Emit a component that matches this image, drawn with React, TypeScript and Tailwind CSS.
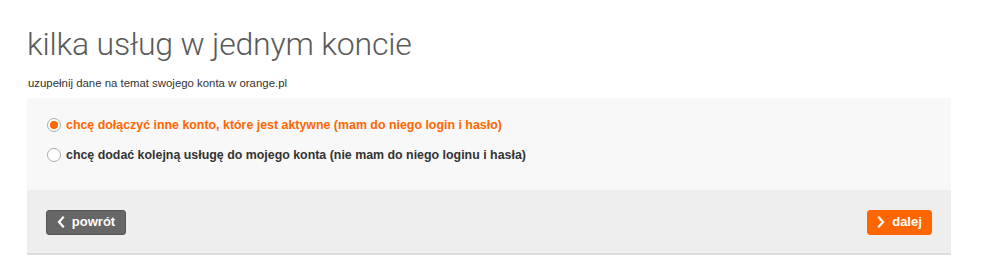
import React, { useState } from 'react'

const options = [
  { id: 'join', label: 'chcę dołączyć inne konto, które jest aktywne (mam do niego login i hasło)' },
  { id: 'add', label: 'chcę dodać kolejną usługę do mojego konta (nie mam do niego loginu i hasła)' },
]

function Chevron({ dir }: { dir: 'left' | 'right' }) {
  return (
    <svg width="8" height="12" viewBox="0 0 8 12" className="shrink-0">
      <path
        d={dir === 'left' ? 'M6 1.5L2 6l4 4.5' : 'M2 1.5L6 6l-4 4.5'}
        fill="none"
        stroke="white"
        strokeWidth="2.2"
        strokeLinecap="square"
      />
    </svg>
  )
}

export default function App() {
  const [selected, setSelected] = useState('join')

  return (
    <div className="w-[999px] h-[270px] bg-white font-['Liberation_Sans',Arial,sans-serif]">
      <div className="pl-[27px] w-[951px]">
        <h1 className="pt-[25px] text-[32px] leading-[38px] font-light text-[#5a5a5a] font-['Roboto',sans-serif] tracking-[-0.2px]">
          kilka usług w jednym koncie
        </h1>
        <p className="mt-[12px] text-[11.4px] leading-[16px] text-[#333] pl-px">
          uzupełnij dane na temat swojego konta w orange.pl
        </p>

        <div className="mt-[7px] bg-[#f8f8f8] h-[92px] pt-[19px] pl-[20px] flex flex-col gap-[14px]">
          {options.map((o) => {
            const active = selected === o.id
            return (
              <label
                key={o.id}
                className="flex items-center gap-[5px] cursor-pointer h-[16px]"
                onClick={() => setSelected(o.id)}
              >
                <span className="w-[14px] h-[14px] rounded-full border border-[#aaa] bg-white flex items-center justify-center">
                  {active && <span className="w-[8px] h-[8px] rounded-full bg-[#ff6600]" />}
                </span>
                <span
                  className={
                    active
                      ? 'text-[12.4px] font-bold text-[#ff6600]'
                      : 'text-[12.4px] font-bold text-[#333]'
                  }
                >
                  {o.label}
                </span>
              </label>
            )
          })}
        </div>

        <div className="h-[65px] bg-[#eeeeee] border-b-2 border-[#dddddd] flex items-start justify-between px-[19px] pt-[20px]">
          <button className="h-[25px] w-[80px] rounded-[3px] bg-[#666666] border border-[#555] text-white text-[13px] font-bold flex items-center justify-center gap-[7px] pb-px">
            <Chevron dir="left" />
            powrót
          </button>
          <button className="h-[25px] w-[65px] rounded-[3px] bg-[#ff6600] border border-[#f60] text-white text-[13px] font-bold flex items-center justify-center gap-[7px] pb-px">
            <Chevron dir="right" />
            dalej
          </button>
        </div>
      </div>
    </div>
  )
}
